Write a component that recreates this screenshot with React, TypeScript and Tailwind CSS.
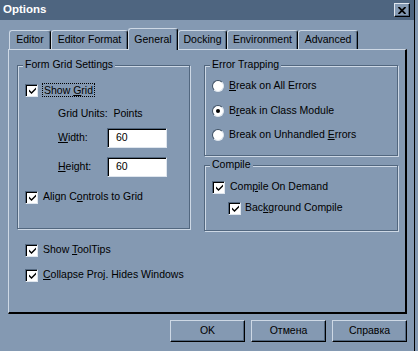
import type { ReactNode } from "react";

function Check({ checked = true }: { checked?: boolean }) {
  return (
    <span className="flex h-[13px] w-[13px] shrink-0 items-center justify-center border border-t-[#52677f] border-l-[#52677f] border-r-[#dfe6ee] border-b-[#dfe6ee] bg-white shadow-[inset_1px_1px_0_#000]">
      {checked && (
        <svg width="7" height="7" viewBox="0 0 7 7" className="ml-[1px] mt-[1px]">
          <polygon points="0,2.5 2.5,5 7,0.5 7,2.5 2.5,7 0,4.5" fill="#000" />
        </svg>
      )}
    </span>
  );
}

function Radio({ on = false }: { on?: boolean }) {
  return (
    <span className="flex h-[12px] w-[12px] shrink-0 items-center justify-center rounded-full border border-t-[#3d4f63] border-l-[#3d4f63] border-r-[#dfe6ee] border-b-[#dfe6ee] bg-white">
      {on && <span className="h-[4px] w-[4px] rounded-full bg-black" />}
    </span>
  );
}

function Group({ title, className, children }: { title: string; className: string; children: ReactNode }) {
  return (
    <div className={`flex flex-col border border-[#52677f] pl-[7px] shadow-[inset_1px_1px_0_#cdd8e5,1px_1px_0_#cdd8e5] ${className}`}>
      <div className="-mt-[8px] flex h-[14px] items-center">
        <span className="-ml-[2px] bg-[#8499b2] px-[2px]">{title}</span>
      </div>
      {children}
    </div>
  );
}

function Row({ className, children }: { className: string; children: ReactNode }) {
  return <div className={`flex h-[16px] items-center ${className}`}>{children}</div>;
}

function Field({ value }: { value: string }) {
  return (
    <div className="flex h-[20px] w-[60px] items-center border border-t-[#52677f] border-l-[#52677f] border-r-[#dfe6ee] border-b-[#dfe6ee] bg-white pl-[8px] shadow-[inset_1px_1px_0_#000]">
      {value}
    </div>
  );
}

const tabs = [
  { label: "Editor", w: "w-[42px]" },
  { label: "Editor Format", w: "w-[77px]" },
  { label: "General", w: "w-[50px]", active: true },
  { label: "Docking", w: "w-[49px]" },
  { label: "Environment", w: "w-[71px]" },
  { label: "Advanced", w: "w-[60px]" },
];

export default function App() {
  return (
    <div className="flex h-[351px] w-[418px] overflow-hidden bg-[#8499b2] font-['Liberation_Sans',Arial,sans-serif] text-[10.5px] text-black">
      <div className="flex w-[415px] flex-col border-r border-black">
        <div className="flex h-[20px] items-center justify-between bg-[#4e6580] pl-[3px] pr-[4px]">
          <span className="text-[11.5px] font-bold text-white">Options</span>
          <button className="flex h-[14px] w-[16px] items-center justify-center border border-t-[#dfe6ee] border-l-[#dfe6ee] border-r-black border-b-black bg-[#8499b2] shadow-[inset_-1px_-1px_0_#52677f]">
            <svg width="8" height="7" viewBox="0 0 8 7">
              <path d="M0.5 0 L7.5 7 M7.5 0 L0.5 7" stroke="#000" strokeWidth="1.8" />
            </svg>
          </button>
        </div>

        <div className="flex flex-col pl-[8px] pt-[8px]">
          <div className="flex h-[21px] items-end pl-[1px]">
            {tabs.map((t) =>
              t.active ? (
                <div
                  key={t.label}
                  className={`relative z-10 -mb-[1px] flex h-[22px] ${t.w} items-start justify-center rounded-t-[3px] border-l border-t border-r border-l-[#cdd8e5] border-t-[#cdd8e5] border-r-black bg-[#8499b2] pt-[3px] shadow-[inset_-1px_0_0_#52677f]`}
                >
                  {t.label}
                </div>
              ) : (
                <div
                  key={t.label}
                  className={`flex h-[19px] ${t.w} items-center justify-center rounded-t-[3px] border-l border-t border-r border-l-[#cdd8e5] border-t-[#cdd8e5] border-r-black bg-[#8499b2] shadow-[inset_-1px_0_0_#52677f]`}
                >
                  {t.label}
                </div>
              )
            )}
          </div>

          <div className="flex h-[265px] w-[399px] flex-col border-l border-t border-r-2 border-b-2 border-l-[#cdd8e5] border-t-[#cdd8e5] border-r-black border-b-black pl-[8px] pt-[15px]">
            <div className="flex gap-[14px]">
              <Group title="Form Grid Settings" className="h-[164px] w-[173px]">
                <Row className="mt-[10px] gap-[4px]">
                  <Check />
                  <span className="border border-dotted border-black px-[1px] leading-[12px]">
                    Show <u className="underline-offset-1">G</u>rid
                  </span>
                </Row>
                <Row className="mt-[8px] pl-[33px]">Grid Units:&nbsp;&nbsp;Points</Row>
                <div className="mt-[6px] flex h-[20px] items-center pl-[33px]">
                  <span className="w-[49px]">
                    <u>W</u>idth:
                  </span>
                  <Field value="60" />
                </div>
                <div className="mt-[9px] flex h-[20px] items-center pl-[33px]">
                  <span className="w-[49px]">
                    <u>H</u>eight:
                  </span>
                  <Field value="60" />
                </div>
                <Row className="mt-[12px] gap-[5px]">
                  <Check />
                  <span>
                    Align C<u>o</u>ntrols to Grid
                  </span>
                </Row>
              </Group>

              <div className="flex flex-col gap-[9px]">
                <Group title="Error Trapping" className="h-[91px] w-[194px]">
                  <Row className="mt-[6px] gap-[5px]">
                    <Radio />
                    <span>
                      <u>B</u>reak on All Errors
                    </span>
                  </Row>
                  <Row className="mt-[9px] gap-[5px]">
                    <Radio on />
                    <span>
                      B<u>r</u>eak in Class Module
                    </span>
                  </Row>
                  <Row className="mt-[8px] gap-[5px]">
                    <Radio />
                    <span>
                      Break on Unhandled <u>E</u>rrors
                    </span>
                  </Row>
                </Group>
                <Group title="Compile" className="h-[66px] w-[194px]">
                  <Row className="mt-[7px] gap-[5px]">
                    <Check />
                    <span>
                      Com<u>p</u>ile On Demand
                    </span>
                  </Row>
                  <Row className="mt-[5px] gap-[4px] pl-[16px]">
                    <Check />
                    <span>
                      Bac<u>k</u>ground Compile
                    </span>
                  </Row>
                </Group>
              </div>
            </div>

            <Row className="mt-[11px] gap-[5px] pl-[8px]">
              <Check />
              <span>
                Show <u>T</u>oolTips
              </span>
            </Row>
            <Row className="mt-[9px] gap-[5px] pl-[8px]">
              <Check />
              <span>
                <u>C</u>ollapse Proj. Hides Windows
              </span>
            </Row>
          </div>

          <div className="mt-[6px] flex w-[399px] justify-end gap-[6px]">
            {["OK", "Отмена", "Справка"].map((b) => (
              <button
                key={b}
                className="flex h-[22px] w-[75px] items-center justify-center border border-t-[#cdd8e5] border-l-[#cdd8e5] border-r-black border-b-black bg-[#8499b2] shadow-[inset_-1px_-1px_0_#52677f]"
              >
                {b}
              </button>
            ))}
          </div>
        </div>
      </div>
    </div>
  );
}
